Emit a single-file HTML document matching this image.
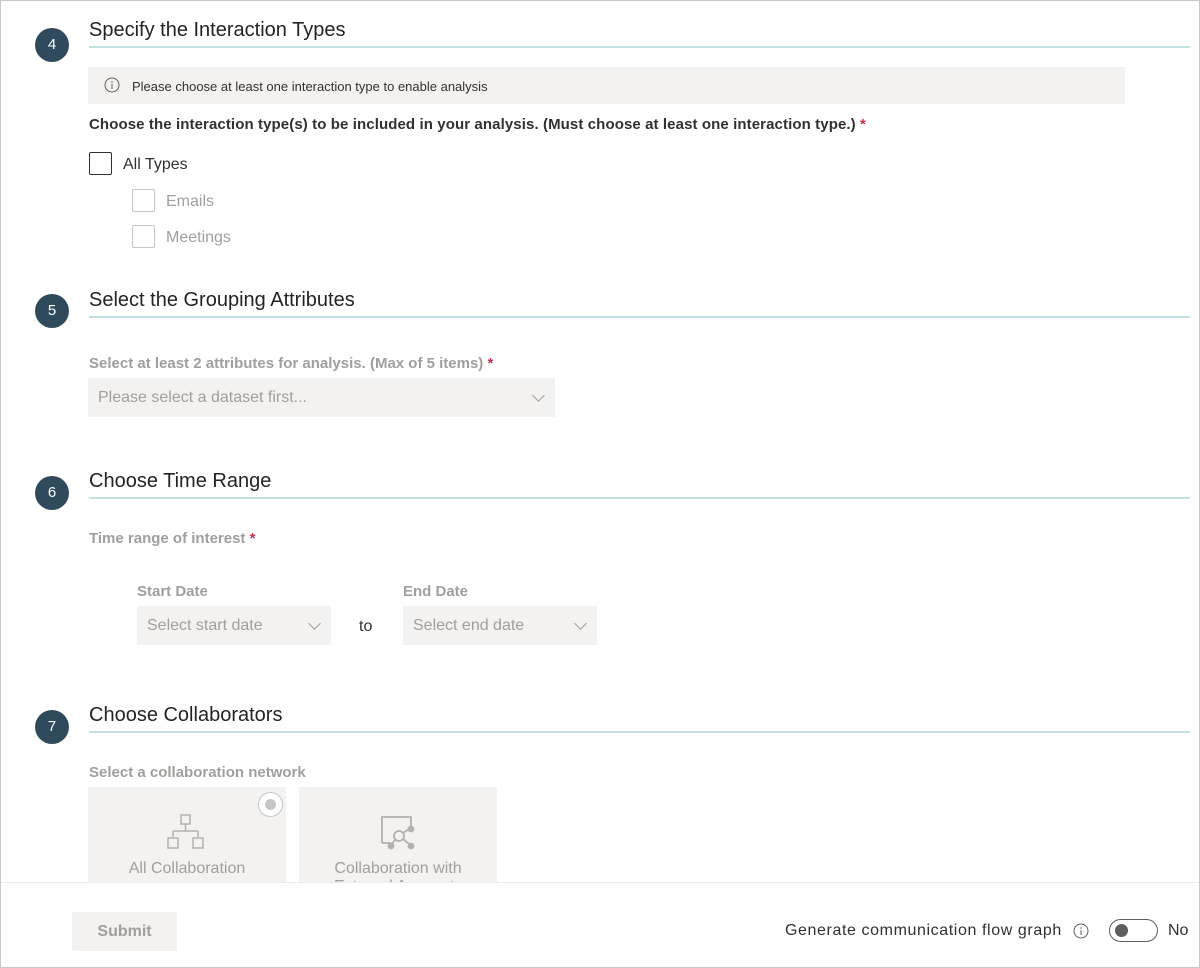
<!DOCTYPE html>
<html><head><style>
*{box-sizing:border-box;margin:0;padding:0}
body{width:1200px;height:968px;background:#fff;font-family:"Liberation Sans",sans-serif;position:relative;overflow:hidden}
.frame{position:absolute;left:0;top:0;width:1200px;height:968px;border:1px solid #c8c8c8}
.a{position:absolute;white-space:nowrap}
.num{position:absolute;left:35px;width:34px;height:34px;border-radius:50%;background:#2f4a5c;color:#fff;font-size:15px;text-align:center;line-height:34px}
.h{position:absolute;left:89px;font-size:20px;color:#252423}
.line{position:absolute;left:89px;width:1101px;height:2px;background:#c3e0e4}
.lbl{font-size:15px;font-weight:bold;color:#a19f9d}
.req{color:#c4314b}
.dd{position:absolute;background:#f3f2f1;color:#a19f9d;font-size:16px;padding-left:10px;line-height:40px}
.chev{position:absolute;right:12px;top:13px;width:9px;height:9px;border-right:1.5px solid #a19f9d;border-bottom:1.5px solid #a19f9d;transform:rotate(45deg)}
.cb{position:absolute;border-radius:2px}
.card{position:absolute;top:787px;width:198px;height:100px;background:#f3f2f1}
</style></head><body>
<div class="frame"></div>

<div class="num" style="top:28px">4</div>
<div class="h a" style="top:19px">Specify the Interaction Types</div>
<div class="line" style="top:46px"></div>
<div class="a" style="left:88px;top:67px;width:1037px;height:37px;background:#f3f2f1"></div>
<svg class="a" style="left:104px;top:77px" width="16" height="16" viewBox="0 0 16 16"><circle cx="8" cy="8" r="7" fill="none" stroke="#605e5c" stroke-width="1"/><circle cx="8" cy="5" r="0.8" fill="#605e5c"/><path d="M8 7v5" stroke="#605e5c" stroke-width="1"/></svg>
<div class="a" style="left:132px;top:79px;font-size:13px;color:#323130">Please choose at least one interaction type to enable analysis</div>
<div class="a" style="left:89px;top:116px;font-size:15px;font-weight:bold;color:#323130;letter-spacing:0.1px">Choose the interaction type(s) to be included in your analysis. (Must choose at least one interaction type.) <span class="req">*</span></div>
<div class="cb" style="left:89px;top:152px;width:23px;height:23px;border:1.5px solid #323130"></div>
<div class="a" style="left:123px;top:156px;font-size:16px;color:#323130">All Types</div>
<div class="cb" style="left:132px;top:189px;width:23px;height:23px;border:1px solid #c8c6c4"></div>
<div class="a" style="left:166px;top:193px;font-size:16px;color:#a19f9d">Emails</div>
<div class="cb" style="left:132px;top:225px;width:23px;height:23px;border:1px solid #c8c6c4"></div>
<div class="a" style="left:166px;top:229px;font-size:16px;color:#a19f9d">Meetings</div>

<div class="num" style="top:294px">5</div>
<div class="h a" style="top:289px">Select the Grouping Attributes</div>
<div class="line" style="top:316px"></div>
<div class="a lbl" style="left:89px;top:355px">Select at least 2 attributes for analysis. (Max of 5 items) <span class="req">*</span></div>
<div class="dd" style="left:88px;top:378px;width:467px;height:39px">Please select a dataset first...<div class="chev"></div></div>

<div class="num" style="top:476px">6</div>
<div class="h a" style="top:470px">Choose Time Range</div>
<div class="line" style="top:497px"></div>
<div class="a lbl" style="left:89px;top:530px">Time range of interest <span class="req">*</span></div>
<div class="a lbl" style="left:137px;top:583px">Start Date</div>
<div class="a lbl" style="left:403px;top:583px">End Date</div>
<div class="dd" style="left:137px;top:606px;width:194px;height:39px">Select start date<div class="chev"></div></div>
<div class="a" style="left:359px;top:618px;font-size:16px;color:#323130">to</div>
<div class="dd" style="left:403px;top:606px;width:194px;height:39px">Select end date<div class="chev"></div></div>

<div class="num" style="top:710px">7</div>
<div class="h a" style="top:704px">Choose Collaborators</div>
<div class="line" style="top:731px"></div>
<div class="a lbl" style="left:89px;top:764px">Select a collaboration network</div>
<div class="card" style="left:88px"></div>
<div class="a" style="left:258px;top:792px;width:25px;height:25px;border-radius:50%;background:#fff;border:1px solid #c8c6c4"></div>
<div class="a" style="left:265px;top:799px;width:11px;height:11px;border-radius:50%;background:#c8c6c4"></div>
<svg class="a" style="left:166px;top:813px" width="40" height="40" viewBox="0 0 40 40" fill="none" stroke="#b3b0ad" stroke-width="1.5"><rect x="15" y="2" width="9" height="9"/><path d="M19.5 11v7M7 18h25M7 18v6M32 18v6"/><rect x="2" y="25" width="10" height="10"/><rect x="27" y="25" width="10" height="10"/></svg>
<div class="a" style="left:88px;top:860px;width:198px;text-align:center;font-size:16px;color:#a19f9d">All Collaboration</div>
<div class="card" style="left:299px"></div>
<svg class="a" style="left:378px;top:815px" width="42" height="42" viewBox="0 0 42 42" fill="none" stroke="#b3b0ad" stroke-width="1.8"><path d="M4 28V2h29v10"/><path d="M4 28h9"/><circle cx="21" cy="21" r="5"/><path d="M25 18l6-4M25 24l6 5M17 25l-3 4"/><circle cx="33" cy="14" r="2.5" fill="#b3b0ad"/><circle cx="33" cy="31" r="2.5" fill="#b3b0ad"/><circle cx="13" cy="31" r="2.5" fill="#b3b0ad"/></svg>
<div class="a" style="left:299px;top:860px;width:198px;text-align:center;font-size:16px;color:#a19f9d">Collaboration with</div>
<div class="a" style="left:299px;top:878px;width:198px;text-align:center;font-size:16px;color:#a19f9d">External Accounts</div>

<div class="a" style="left:1px;top:882px;width:1198px;height:85px;background:#fff;border-top:1px solid #edebe9"></div>
<div class="a" style="left:72px;top:912px;width:105px;height:39px;background:#f3f2f1;border-radius:2px;color:#a19f9d;font-size:16px;font-weight:bold;text-align:center;line-height:39px">Submit</div>
<div class="a" style="left:785px;top:922px;font-size:16px;color:#323130;letter-spacing:0.6px">Generate communication flow graph</div>
<svg class="a" style="left:1073px;top:923px" width="16" height="16" viewBox="0 0 16 16"><circle cx="8" cy="8" r="7" fill="none" stroke="#605e5c"/><circle cx="8" cy="5" r="0.8" fill="#605e5c"/><path d="M8 7v5" stroke="#605e5c"/></svg>
<div class="a" style="left:1109px;top:919px;width:49px;height:23px;border-radius:12px;border:1px solid #605e5c"></div>
<div class="a" style="left:1115px;top:924px;width:13px;height:13px;border-radius:50%;background:#605e5c"></div>
<div class="a" style="left:1168px;top:922px;font-size:16px;color:#323130">No</div>
</body></html>
